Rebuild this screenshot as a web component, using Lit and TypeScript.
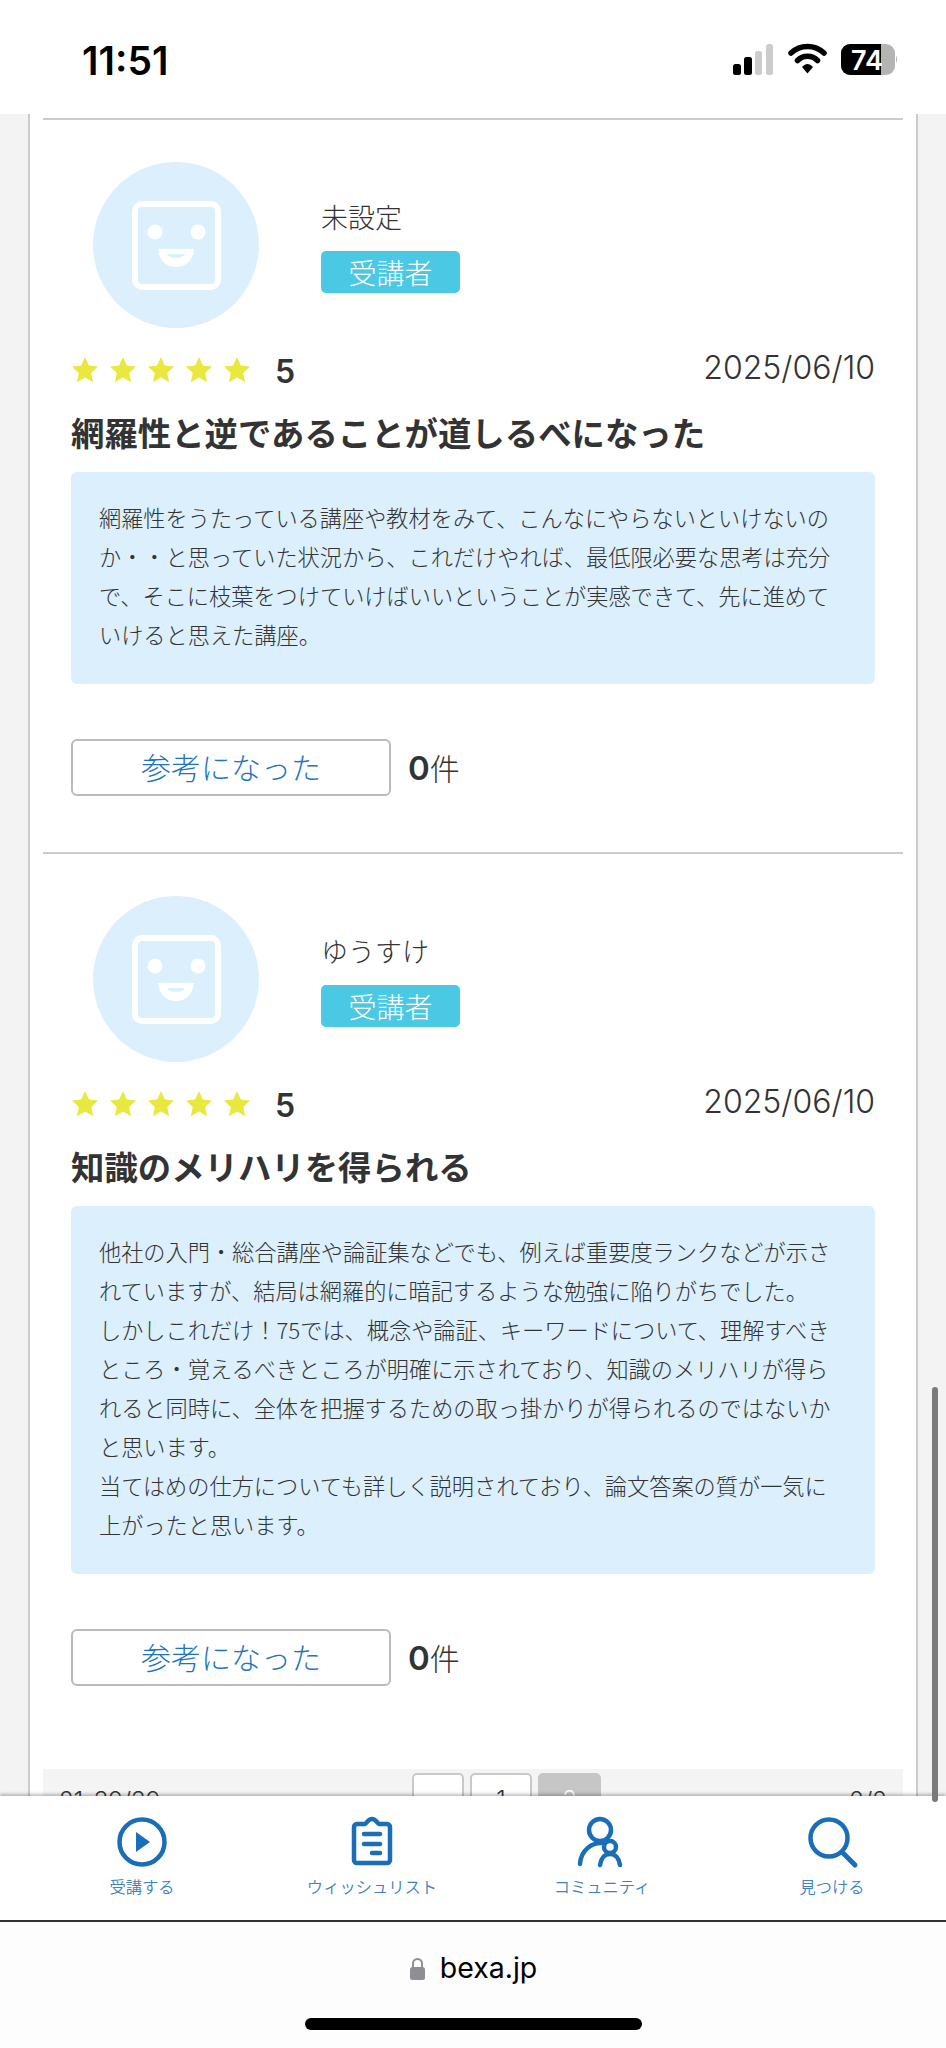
import { LitElement, html, css, svg } from "lit";
import { customElement } from "lit/decorators.js";

const star = svg`<path d="M13 0l3.900 8.600 9.100 1-6.800 6.300 1.900 9.300L13 20.500 4.900 25.200l1.900-9.300L0 9.600l9.100-1z" fill="#e8e83f"/>`;

const reviews = [
  {
    name: "未設定",
    title: "網羅性と逆であることが道しるべになった",
    lines: [
      "網羅性をうたっている講座や教材をみて、こんなにやらないといけないの",
      "か・・と思っていた状況から、これだけやれば、最低限必要な思考は充分",
      "で、そこに枝葉をつけていけばいいということが実感できて、先に進めて",
      "いけると思えた講座。",
    ],
  },
  {
    name: "ゆうすけ",
    title: "知識のメリハリを得られる",
    lines: [
      "他社の入門・総合講座や論証集などでも、例えば重要度ランクなどが示さ",
      "れていますが、結局は網羅的に暗記するような勉強に陥りがちでした。",
      "しかしこれだけ！75では、概念や論証、キーワードについて、理解すべき",
      "ところ・覚えるべきところが明確に示されており、知識のメリハリが得ら",
      "れると同時に、全体を把握するための取っ掛かりが得られるのではないか",
      "と思います。",
      "当てはめの仕方についても詳しく説明されており、論文答案の質が一気に",
      "上がったと思います。",
    ],
  },
];

@customElement("app-root")
export class AppRoot extends LitElement {
  static styles = css`
    :host {
      display: flex;
      flex-direction: column;
      position: relative;
      width: 946px;
      height: 2048px;
      overflow: hidden;
      background: #fff;
      color: #333;
      font-family: "Noto Sans CJK JP", "Noto Sans", sans-serif;
      font-weight: 300;
    }
    .status {
      flex: 0 0 114px;
      display: flex;
      align-items: center;
      justify-content: space-between;
      padding: 0 49px 0 82px;
      box-sizing: border-box;
      background: #fff;
      position: relative;
    }
    .time {
      font: 600 39px/1 Inter, "Liberation Sans", sans-serif;
      color: #000;
      margin-top: 6px;
    }
    .status-icons {
      display: block;
      margin-top: 5px;
    }
    .main {
      flex: 0 0 1682px;
      overflow: hidden;
      background: #f3f3f3;
      position: relative;
      box-sizing: border-box;
      padding: 0 28px;
    }
    .panel {
      background: #fff;
      border-left: 2px solid #ccc;
      border-right: 2px solid #ccc;
      padding: 4px 13px 0;
      width: 890px;
      box-sizing: border-box;
    }
    .review {
      border-top: 2px solid #ccc;
      padding: 42px 28px 56px;
    }
    .head {
      display: flex;
      align-items: center;
      gap: 62px;
      padding-left: 22px;
    }
    .avatar {
      width: 166px;
      height: 166px;
      flex: none;
      display: block;
    }
    .who {
      display: flex;
      flex-direction: column;
      align-items: flex-start;
      gap: 15px;
      padding-top: 3px;
    }
    .name {
      font-size: 27px;
      line-height: 38px;
      margin-top: -2px;
    }
    .badge {
      width: 139px;
      height: 42px;
      background: #4bc9e4;
      color: #fff;
      border-radius: 5px;
      font-size: 28px;
      line-height: 42px;
      text-align: center;
    }
    .rating {
      display: flex;
      align-items: center;
      margin-top: 29px;
      height: 26px;
    }
    .stars {
      display: flex;
      gap: 12px;
      margin-left: 1px;
    }
    .stars svg {
      width: 26px;
      height: 26px;
      display: block;
    }
    .score {
      margin-left: 25px;
      font: 600 32px/1 Inter, sans-serif;
      color: #333;
      margin-top: 4px;
    }
    .date {
      margin-left: auto;
      font: 300 32px/1 Inter, sans-serif;
      margin-top: -4px;
      color: #333;
    }
    .title {
      font-size: 33.4px;
      font-weight: 700;
      line-height: 44px;
      margin: 27px 0 18px;
      color: #333;
    }
    .box {
      background: #dbeffc;
      border-radius: 6px;
      padding: 26px 28px 30px;
      font-size: 22.2px;
      line-height: 39px;
      white-space: nowrap;
      color: #333;
    }
    .vote {
      display: flex;
      align-items: center;
      gap: 17px;
      margin-top: 55px;
    }
    .btn {
      width: 320px;
      height: 57px;
      box-sizing: border-box;
      border: 2px solid #bbb;
      border-radius: 6px;
      background: #fff;
      color: #1f74bb;
      font-size: 30px;
      line-height: 51px;
      text-align: center;
    }
    .count {
      font-size: 30px;
      display: flex;
      align-items: baseline;
      margin-top: -2px;
    }
    .count b {
      font: 600 33px/1 Inter, sans-serif;
    }
    .pager {
      display: flex;
      align-items: flex-start;
      background: #f4f4f4;
      height: 80px;
      margin-top: 27px;
      padding: 4px 0 0 369px;
      box-sizing: border-box;
      color: #333;
      position: relative;
      gap: 6px;
    }
    .pg-text {
      position: absolute;
      top: 20px;
      font: 300 24px/1 Inter, sans-serif;
    }
    .pg-text.l {
      left: 16px;
    }
    .pg-text.r {
      right: 16px;
    }
    .pg {
      height: 60px;
      border: 2px solid #c9c9c9;
      border-radius: 5px;
      background: #fff;
      box-sizing: border-box;
      text-align: center;
      font: 300 24px/50px Inter, sans-serif;
    }
    .pg.a {
      width: 52px;
    }
    .pg.b {
      width: 62px;
    }
    .pg.c {
      width: 63px;
      background: #c6c6c6;
      border-color: #c6c6c6;
      color: #fff;
    }
    .scrollbar {
      position: absolute;
      right: 8px;
      top: 1387px;
      width: 6px;
      height: 415px;
      border-radius: 3px;
      background: #7b7b7b;
      z-index: 3;
    }
    .tabs {
      flex: 0 0 126px;
      display: grid;
      grid-template-columns: repeat(4, 230px);
      padding-left: 27px;
      box-sizing: border-box;
      background: #fff;
      border-bottom: 2px solid #333;
      box-shadow: 0 -2px 3px rgba(0, 0, 0, 0.25);
      position: relative;
      z-index: 2;
    }
    .tab {
      display: flex;
      flex-direction: column;
      align-items: center;
      padding-top: 20px;
    }
    .tab svg {
      width: 56px;
      height: 56px;
      display: block;
    }
    .tab span {
      font-size: 16.3px;
      line-height: 24px;
      margin-top: 2px;
      color: #3f82c0;
      font-weight: 350;
    }
    .url {
      flex: 1;
      background: #fdfdfd;
      display: flex;
      flex-direction: column;
      align-items: center;
    }
    .addr {
      display: flex;
      align-items: center;
      gap: 14px;
      margin-top: 32px;
      font: 400 28.5px/1 Inter, "Liberation Sans", sans-serif;
      color: #000;
    }
    .addr svg {
      width: 17px;
      height: 23px;
      display: block;
    }
    .home {
      width: 337px;
      height: 12px;
      border-radius: 6px;
      background: #000;
      margin-top: 35px;
    }
  `;

  private avatar() {
    return html`<svg class="avatar" viewBox="0 0 166 166">
      <circle cx="83" cy="83" r="83" fill="#dbeffc" />
      <rect x="42" y="42" width="83" height="83" rx="7" fill="none" stroke="#fff" stroke-width="6" />
      <circle cx="62" cy="70" r="7.500" fill="#fff" />
      <circle cx="105" cy="70" r="7.500" fill="#fff" />
      <path d="M65 87h36c-1 12-9 18-18 18s-17-6-18-18z" fill="#fff" />
      <path d="M74 92h18c-2 5-16 5-18 0z" fill="#dbeffc" />
    </svg>`;
  }

  private review(r: (typeof reviews)[number]) {
    return html`<section class="review">
      <div class="head">
        ${this.avatar()}
        <div class="who">
          <div class="name">${r.name}</div>
          <div class="badge">受講者</div>
        </div>
      </div>
      <div class="rating">
        <div class="stars">
          ${[0, 1, 2, 3, 4].map(() => html`<svg viewBox="0 0 26 26">${star}</svg>`)}
        </div>
        <div class="score">5</div>
        <div class="date">2025/06/10</div>
      </div>
      <h2 class="title">${r.title}</h2>
      <div class="box">${r.lines.map((l) => html`${l}<br />`)}</div>
      <div class="vote">
        <div class="btn">参考になった</div>
        <div class="count"><b>0</b>件</div>
      </div>
    </section>`;
  }

  render() {
    return html`
      <header class="status">
        <div class="time">11:51</div>
        <svg class="status-icons" width="164" height="34" viewBox="0 0 164 34">
          <rect x="0" y="21" width="8" height="11" rx="2.500" fill="#000" />
          <rect x="11" y="14" width="8" height="18" rx="2.500" fill="#000" />
          <rect x="22" y="8" width="7" height="24" rx="2.500" fill="#ccc" />
          <rect x="33" y="1" width="7" height="31" rx="2.500" fill="#ccc" />
          <path d="M58 10a24 24 0 0 1 33 0" fill="none" stroke="#000" stroke-width="5.500" stroke-linecap="round" />
          <path d="M64.500 17.500a14 14 0 0 1 20 0" fill="none" stroke="#000" stroke-width="5.500" stroke-linecap="round" />
          <path d="M69 24c4-4 7-4 11 0l-5.500 6.500z" fill="#000" />
          <rect x="108" y="1" width="54" height="31" rx="9" fill="#b4b4b4" />
          <path d="M117 1h31v31h-31a9 9 0 0 1-9-9V10a9 9 0 0 1 9-9z" fill="#000" />
          <path d="M163 13c1.500.5 1.500 6 0 7z" fill="#b4b4b4" />
          <text x="118" y="27" font-family="Inter, sans-serif" font-weight="600" font-size="27" fill="#fff">74</text>
        </svg>
      </header>
      <main class="main">
        <div class="panel">
          ${reviews.map((r) => this.review(r))}
          <div class="pager">
            <div class="pg-text l">21-39/39</div>
            <div class="pg a"></div>
            <div class="pg b">1</div>
            <div class="pg c">2</div>
            <div class="pg-text r">2/2</div>
          </div>
        </div>
      </main>
      <div class="scrollbar"></div>
      <nav class="tabs">
        <div class="tab">
          <svg viewBox="0 0 56 56">
            <circle cx="28" cy="26" r="22.500" fill="none" stroke="#1a6db8" stroke-width="4.500" />
            <path d="M22 16l14 10-14 10z" fill="#1a6db8" />
          </svg>
          <span>受講する</span>
        </div>
        <div class="tab">
          <svg viewBox="0 0 56 56">
            <path d="M13 8h8c2-1 3-5 7-5s5 4 7 5h8a3 3 0 0 1 3 3v33a3 3 0 0 1-3 3H13a3 3 0 0 1-3-3V11a3 3 0 0 1 3-3z" fill="none" stroke="#1a6db8" stroke-width="4.500" stroke-linejoin="round" />
            <path d="M20 18h16M20 28h16M28 37h8" fill="none" stroke="#1a6db8" stroke-width="4.500" stroke-linecap="round" />
          </svg>
          <span>ウィッシュリスト</span>
        </div>
        <div class="tab">
          <svg viewBox="0 0 56 56">
            <circle cx="26" cy="14" r="11" fill="none" stroke="#1a6db8" stroke-width="4.500" />
            <circle cx="36" cy="31" r="6" fill="none" stroke="#1a6db8" stroke-width="4.500" />
            <path d="M6 48c1-14 12-22 23-21" fill="none" stroke="#1a6db8" stroke-width="4.500" stroke-linecap="round" />
            <path d="M26 49c1-7 5-11 10-11s9 4 10 11" fill="none" stroke="#1a6db8" stroke-width="4.500" stroke-linecap="round" />
          </svg>
          <span>コミュニティ</span>
        </div>
        <div class="tab">
          <svg viewBox="0 0 56 56">
            <circle cx="25" cy="22" r="18.500" fill="none" stroke="#1a6db8" stroke-width="4.500" />
            <path d="M38 36l13 13" fill="none" stroke="#1a6db8" stroke-width="5" stroke-linecap="round" />
          </svg>
          <span>見つける</span>
        </div>
      </nav>
      <footer class="url">
        <div class="addr">
          <svg viewBox="0 0 17 23">
            <path d="M4 11V6.500a4.500 4.500 0 0 1 9 0V11" fill="none" stroke="#8e8e93" stroke-width="2" />
            <rect x="1" y="10" width="15" height="13" rx="2.500" fill="#8e8e93" />
          </svg>
          bexa.jp
        </div>
        <div class="home"></div>
      </footer>
    `;
  }
}
